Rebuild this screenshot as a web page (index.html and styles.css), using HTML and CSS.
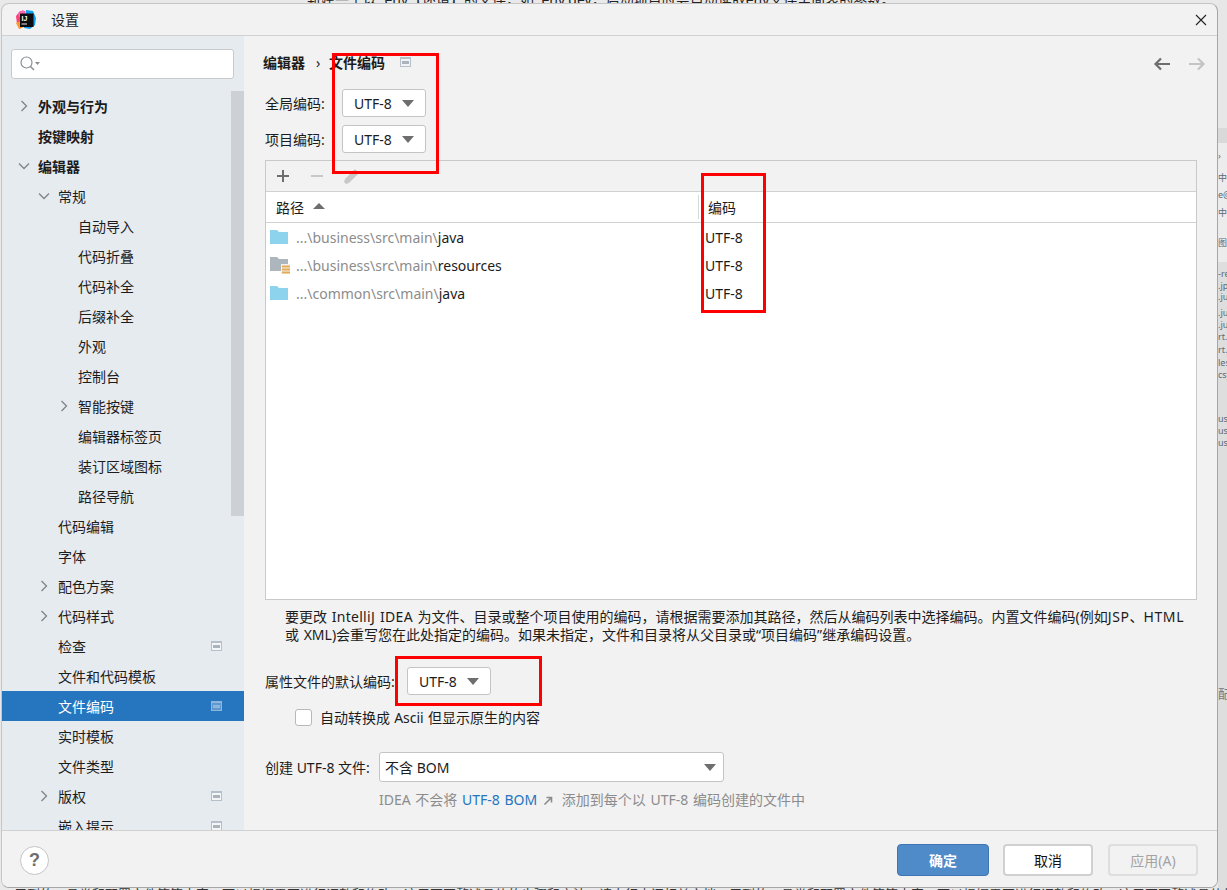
FILE: index.html
```html
<!DOCTYPE html>
<html lang="zh">
<head>
<meta charset="utf-8">
<title>设置</title>
<link rel="stylesheet" href="styles.css">
</head>
<body>
<div class="backdrop">
  <div class="bg-top">新建一个以 .env【环境】的文件，如 .env.dev，启动项目时会自动读取env文件里面表的参数。</div>
  <div class="bg-side">
    <span class="s1">›</span><span class="s2">中图</span><span class="s3">e@</span><span class="s4">中图</span><span class="s5">图图</span>
    <span class="s6">-rep</span><span class="s7">.jpu</span><span class="s8">.jun</span><span class="s9">.jun</span><span class="s10">.jun</span><span class="s11">rt.e</span><span class="s12">rt.j</span><span class="s13">les.</span><span class="s14">csy</span>
    <span class="s15">us.</span><span class="s16">us.</span><span class="s17">us.</span><span class="s18">配</span>
  </div>
  <div class="bg-bottom">用到的工具类和配置文件等等内容，可以根据需要进行调整和修改，这里不再赘述具体的步骤和方法，请自行查阅相关文档。用到的工具类和配置文件等等内容，可以根据需要进行调整和修改，这里不再赘述具体的步骤和方法，请自行查阅相关文档。</div>
</div>

<div class="window">
  <header class="titlebar">
    <svg class="logo" width="20" height="20" viewBox="0 0 20 20">
      <path d="M0 6 L4 1 L9 1 L9 12 L4 19 L1 14Z" fill="#fc3f78"/>
      <path d="M0 13 L6 10 L8 17 L3 19Z" fill="#fd9a2d"/>
      <path d="M10 0 L17 1 L20 8 L19 15 L14 19 L8 18Z" fill="#139fea"/>
      <path d="M2 3 L7 0 L10 3 L3 7Z" fill="#f56bb0"/>
      <rect x="4" y="3.500" width="13.500" height="13.500" fill="#0d0d12"/>
      <text x="5.500" y="10.500" class="logo-text">IJ</text>
      <rect x="5.500" y="13.500" width="5.500" height="1" fill="#eee"/>
    </svg>
    <span class="title">设置</span>
    <svg class="close" width="12" height="12" viewBox="0 0 12 12"><path d="M1 1L11 11M11 1L1 11" stroke="#222" stroke-width="1.100" fill="none"/></svg>
  </header>

  <div class="main">
    <aside class="sidebar">
      <div class="search">
        <svg width="22" height="18" viewBox="0 0 22 18"><circle cx="7.500" cy="7.500" r="5.500" fill="none" stroke="#8a8f94" stroke-width="1.200"/><path d="M11.500 11.500L15 15" stroke="#8a8f94" stroke-width="1.500"/><path d="M16 7h5l-2.500 3z" fill="#8a8f94"/></svg>
      </div>
      <div class="tree">
        <div class="scrollbar"></div>
        <div class="row l0 bold"><svg class="chev" width="12" height="12" viewBox="0 0 12 12"><path d="M3.500 1L8.500 6L3.500 11" fill="none" stroke="#7f8489" stroke-width="1.300"/></svg><span>外观与行为</span></div>
        <div class="row l0 bold"><span class="slot"></span><span>按键映射</span></div>
        <div class="row l0 bold"><svg class="chev" width="12" height="12" viewBox="0 0 12 12"><path d="M1 3.500L6 8.500L11 3.500" fill="none" stroke="#7f8489" stroke-width="1.300"/></svg><span>编辑器</span></div>
        <div class="row l1"><svg class="chev" width="12" height="12" viewBox="0 0 12 12"><path d="M1 3.500L6 8.500L11 3.500" fill="none" stroke="#7f8489" stroke-width="1.300"/></svg><span>常规</span></div>
        <div class="row l2"><span class="slot"></span><span>自动导入</span></div>
        <div class="row l2"><span class="slot"></span><span>代码折叠</span></div>
        <div class="row l2"><span class="slot"></span><span>代码补全</span></div>
        <div class="row l2"><span class="slot"></span><span>后缀补全</span></div>
        <div class="row l2"><span class="slot"></span><span>外观</span></div>
        <div class="row l2"><span class="slot"></span><span>控制台</span></div>
        <div class="row l2"><svg class="chev" width="12" height="12" viewBox="0 0 12 12"><path d="M3.500 1L8.500 6L3.500 11" fill="none" stroke="#7f8489" stroke-width="1.300"/></svg><span>智能按键</span></div>
        <div class="row l2"><span class="slot"></span><span>编辑器标签页</span></div>
        <div class="row l2"><span class="slot"></span><span>装订区域图标</span></div>
        <div class="row l2"><span class="slot"></span><span>路径导航</span></div>
        <div class="row l1"><span class="slot"></span><span>代码编辑</span></div>
        <div class="row l1"><span class="slot"></span><span>字体</span></div>
        <div class="row l1"><svg class="chev" width="12" height="12" viewBox="0 0 12 12"><path d="M3.500 1L8.500 6L3.500 11" fill="none" stroke="#7f8489" stroke-width="1.300"/></svg><span>配色方案</span></div>
        <div class="row l1"><svg class="chev" width="12" height="12" viewBox="0 0 12 12"><path d="M3.500 1L8.500 6L3.500 11" fill="none" stroke="#7f8489" stroke-width="1.300"/></svg><span>代码样式</span></div>
        <div class="row l1"><span class="slot"></span><span>检查</span><span class="badge"></span></div>
        <div class="row l1"><span class="slot"></span><span>文件和代码模板</span></div>
        <div class="row l1 selected"><span class="slot"></span><span>文件编码</span><span class="badge"></span></div>
        <div class="row l1"><span class="slot"></span><span>实时模板</span></div>
        <div class="row l1"><span class="slot"></span><span>文件类型</span></div>
        <div class="row l1"><svg class="chev" width="12" height="12" viewBox="0 0 12 12"><path d="M3.500 1L8.500 6L3.500 11" fill="none" stroke="#7f8489" stroke-width="1.300"/></svg><span>版权</span><span class="badge"></span></div>
        <div class="row l1"><span class="slot"></span><span>嵌入提示</span><span class="badge"></span></div>
      </div>
    </aside>

    <section class="content">
      <div class="crumbs">
        <span class="crumb">编辑器</span>
        <span class="sep">›</span>
        <span class="crumb">文件编码</span>
        <span class="badge crumb-badge"></span>
        <svg class="nav first" width="18" height="14" viewBox="0 0 18 14"><path d="M17 7H3M8 1.500L2.500 7L8 12.500" fill="none" stroke="#6e6e6e" stroke-width="2.200"/></svg>
        <svg class="nav" width="18" height="14" viewBox="0 0 18 14"><path d="M1 7H15M10 1.500L15.500 7L10 12.500" fill="none" stroke="#c4c4c4" stroke-width="2.200"/></svg>
      </div>

      <div class="field f-global"><label class="lbl-a">全局编码:</label><div class="combo small"><span>UTF-8</span><i class="caret"></i></div></div>
      <div class="field f-project"><label class="lbl-a">项目编码:</label><div class="combo small"><span>UTF-8</span><i class="caret"></i></div></div>

      <div class="table">
        <div class="toolbar">
          <svg width="14" height="14" viewBox="0 0 14 14"><path d="M7 1V13M1 7H13" stroke="#6e6e6e" stroke-width="2"/></svg>
          <svg width="14" height="14" viewBox="0 0 14 14"><path d="M1 7H13" stroke="#c8c8c8" stroke-width="2"/></svg>
          <svg class="pencil" width="18" height="18" viewBox="0 0 18 18"><path d="M1 15L2 12L12 2L16 6L6 16L3 17Z" fill="#c8c8c8"/></svg>
        </div>
        <div class="thead">
          <div class="th th-path">路径<i class="sort"></i></div>
          <div class="th th-enc">编码</div>
        </div>
        <div class="tr">
          <div class="td-path"><svg width="18" height="14" viewBox="0 0 18 14"><path d="M0 0H7L9 2H18V14H0Z" fill="#8dd3ee"/></svg><span class="dim">...\business\src\main\</span><span>java</span></div>
          <div class="td-enc">UTF-8</div>
        </div>
        <div class="tr">
          <div class="td-path"><svg width="20" height="17" viewBox="0 0 20 17"><path d="M0 0H7L9 2H18V14H0Z" fill="#aeb6bd"/><rect x="11" y="7" width="9" height="10" fill="#f2f2f2"/><path d="M12 9.500h8M12 12.500h8M12 15.500h8" stroke="#e3ac54" stroke-width="2"/></svg><span class="dim shift">...\business\src\main\</span><span>resources</span></div>
          <div class="td-enc">UTF-8</div>
        </div>
        <div class="tr">
          <div class="td-path"><svg width="18" height="14" viewBox="0 0 18 14"><path d="M0 0H7L9 2H18V14H0Z" fill="#8dd3ee"/></svg><span class="dim">...\common\src\main\</span><span>java</span></div>
          <div class="td-enc">UTF-8</div>
        </div>
      </div>

      <p class="desc">要更改 <span class="lat">IntelliJ IDEA</span> 为文件、目录或整个项目使用的编码，请根据需要添加其路径，然后从编码列表中选择编码。内置文件编码(例如<span class="lat2">JSP</span>、<span class="lat2">HTML</span><br>或 XML)会重写您在此处指定的编码。如果未指定，文件和目录将从父目录或“项目编码”继承编码设置。</p>

      <div class="field f-props"><label class="lbl-b">属性文件的默认编码:</label><div class="combo small"><span>UTF-8</span><i class="caret"></i></div></div>

      <div class="check"><span class="box"></span><span>自动转换成 Ascii 但显示原生的内容</span></div>

      <div class="field f-create"><label class="lbl-c">创建 UTF-8 文件:</label><div class="combo wide"><span>不含 BOM</span><i class="caret"></i></div></div>

      <div class="hint">IDEA 不会将 <a class="link">UTF-8 BOM</a><svg class="ext" width="10" height="10" viewBox="0 0 10 10"><path d="M1.500 8.500L8 2M3.500 1.500H8.500V6.500" fill="none" stroke="#8c8c8c" stroke-width="1.600"/></svg> 添加到每个以 UTF-8 编码创建的文件中</div>
    </section>
  </div>

  <footer class="footer">
    <div class="help">?</div>
    <div class="buttons">
      <button class="btn primary">确定</button>
      <button class="btn">取消</button>
      <button class="btn disabled">应用(A)</button>
    </div>
  </footer>

  <div class="mark m1"></div>
  <div class="mark m2"></div>
  <div class="mark m3"></div>
</div>
</body>
</html>
```

FILE: styles.css
```css
* { box-sizing: border-box; }
html, body { margin: 0; height: 100%; }
body {
  width: 1227px;
  height: 890px;
  overflow: hidden;
  position: relative;
  background: #e9e9e9;
  font-family: "Noto Sans", "Noto Sans CJK SC", sans-serif;
  font-size: 14px;
  color: #1c1c1c;
}

/* what shows behind the dialog */
.backdrop { position: absolute; inset: 0; overflow: hidden; }
.bg-top { position: absolute; left: 307px; top: -9px; font-size: 14px; line-height: 18px; white-space: nowrap; color: #222; }
.bg-bottom { position: absolute; left: 14px; top: 886px; font-size: 13px; line-height: 16px; white-space: nowrap; color: #333; }
.bg-side { position: absolute; left: 1218px; top: 0; width: 9px; height: 890px; background: linear-gradient(#e7e7e7, #e7e7e7 128px, #d9d9d9 128px, #d9d9d9 143px, #ececec 143px, #ececec 262px, #dedede 262px, #dedede 880px); overflow: hidden; font-size: 9px; line-height: 10px; color: #5a6a78; }
.bg-side span { position: absolute; left: 0; white-space: nowrap; }
.s1 { top: 151px; } .s2 { top: 173px; } .s3 { top: 190px; } .s4 { top: 208px; } .s5 { top: 238px; }
.s6 { top: 269px; } .s7 { top: 281px; } .s8 { top: 292px; } .s9 { top: 308px; } .s10 { top: 320px; }
.s11 { top: 332px; } .s12 { top: 345px; } .s13 { top: 358px; } .s14 { top: 370px; }
.s15 { top: 414px; } .s16 { top: 426px; } .s17 { top: 438px; } .s18 { top: 690px; font-size: 12px; color: #777; }

/* dialog */
.window {
  position: relative;
  margin: 3px 0 0 1px;
  width: 1217px;
  height: 885px;
  background: #f2f2f2;
  border: 1px solid #a6a6a6;
  border-left-color: #c6c6c6;
  border-top-color: #c4c4c4;
  border-radius: 8px;
  overflow: hidden;
  display: flex;
  flex-direction: column;
}
.titlebar {
  height: 32px;
  flex: none;
  display: flex;
  align-items: center;
  border-bottom: 1px solid #d1d1d1;
  padding: 0 9px 0 14px;
}
.logo { margin-top: 0; flex: none; }
.logo-text { font-family: "Liberation Sans", sans-serif; font-size: 7px; font-weight: 700; fill: #fff; }
.title { margin-left: 15px; margin-top: -2px; }
.close { margin-left: auto; margin-right: 1px; margin-top: 1px; }

.main { height: 794px; flex: none; display: flex; }

/* sidebar */
.sidebar { width: 242px; flex: none; background: #e6ebf0; display: flex; flex-direction: column; overflow: hidden; }
.search {
  width: 223px;
  height: 30px;
  flex: none;
  margin: 13px 0 12px 9px;
  background: #fff;
  border: 1px solid #c9c9c9;
  border-radius: 3px;
  display: flex;
  align-items: center;
  padding-left: 7px;
}
.tree { position: relative; flex: 1; overflow: hidden; }
.scrollbar { position: absolute; right: 0; top: 0; width: 13px; height: 425px; background: #cdd1d6; }
.row { height: 30px; display: flex; align-items: center; padding-right: 22px; white-space: nowrap; }
.row.l0 { padding-left: 16px; }
.row.l1 { padding-left: 36px; }
.row.l2 { padding-left: 56px; }
.row.bold { font-weight: 700; }
.chev { width: 12px; margin-right: 8px; flex: none; }
.slot { width: 20px; flex: none; }
.row.selected { background: #2675bf; color: #fff; }
.badge {
  width: 11px;
  height: 10px;
  margin-left: auto;
  background: #f4f6f8;
  border: 1px solid #b6c0ca;
  border-top-width: 2px;
  position: relative;
  flex: none;
}
.badge::after { content: ""; position: absolute; left: 1px; right: 1px; top: 2px; height: 3px; background: #a9b4bf; }
.row.selected .badge { background: #5f97cf; border-color: #8db6dc; }
.row.selected .badge::after { background: #8db6dc; }

/* right side */
.content { flex: 1; min-width: 0; padding: 16px 0 0 19px; display: flex; flex-direction: column; background: #f2f2f2; }
.crumbs { height: 20px; display: flex; align-items: center; padding-right: 11px; font-weight: 700; }
.sep { margin: 0 9px 0 11px; font-weight: 400; width: 4px; }
.crumb-badge { margin: 0 0 0 15px; background: #f2f2f2; }
.nav { margin-top: 3px; }
.nav.first { margin-left: auto; margin-right: 17px; }

.field { display: flex; align-items: center; padding-left: 2px; }
.f-global { margin-top: 17px; }
.f-project { margin-top: 8px; }
.f-props { margin-top: 23px; }
.f-create { margin-top: 26px; }
.lbl-a { width: 77px; flex: none; }
.lbl-b { width: 142px; flex: none; }
.lbl-c { width: 114px; flex: none; }

.combo {
  display: flex;
  align-items: center;
  background: #fff;
  border: 1px solid #c4c4c4;
  border-radius: 3px;
  padding-left: 11px;
}
.combo.small { width: 84px; height: 28px; }
.combo.wide { width: 345px; height: 30px; padding-left: 5px; }
.combo.wide .caret { margin-left: auto; margin-right: 7px; }
.caret { width: 0; height: 0; margin-left: 10px; border-left: 6px solid transparent; border-right: 6px solid transparent; border-top: 7px solid #6e6e6e; }

.table {
  margin: 7px 0 0 2px;
  width: 932px;
  height: 440px;
  flex: none;
  background: #fff;
  border: 1px solid #c9c9c9;
}
.toolbar {
  height: 31px;
  background: #f2f2f2;
  border-bottom: 1px solid #d1d1d1;
  display: flex;
  align-items: center;
  gap: 20px;
  padding-left: 10px;
}
.pencil { margin-left: -1px; }
.thead { height: 31px; display: flex; border-bottom: 1px solid #d1d1d1; }
.th { display: flex; align-items: center; }
.th-path { width: 433px; padding-left: 10px; position: relative; }
.th-path::after { content: ""; position: absolute; right: 0; top: 3px; bottom: 3px; width: 1px; background: #d8d8d8; }
.th-enc { padding-left: 9px; }
.sort { margin-left: 9px; margin-bottom: 3px; width: 0; height: 0; border-left: 6px solid transparent; border-right: 6px solid transparent; border-bottom: 6px solid #6e6e6e; }
.tr { height: 28px; display: flex; align-items: center; }
.td-path { width: 439px; display: flex; align-items: center; padding-left: 4px; white-space: nowrap; }
.td-path svg { flex: none; margin-right: 8px; }
.td-path .shift { margin-left: -2px; }
.dim { color: #8c8c8c; }
.td-enc { flex: none; }

.desc { margin: 8px 0 0 22px; line-height: 18px; white-space: nowrap; word-spacing: 1px; }
.lat { letter-spacing: 0.3px; }
.lat2 { letter-spacing: 0.6px; }

.check { margin: 13px 0 0 32px; height: 18px; display: flex; align-items: center; gap: 8px; word-spacing: 0.5px; }
.box { width: 17px; height: 17px; background: #fff; border: 1px solid #b8b8b8; border-radius: 3px; flex: none; }

.hint { margin: 9px 0 0 116px; height: 18px; line-height: 18px; color: #8c8c8c; white-space: nowrap; word-spacing: 1px; }
.link { color: #2675bf; }
.ext { margin: 0 4px 0 6px; vertical-align: -1px; }

/* footer */
.footer {
  height: 57px;
  flex: none;
  display: flex;
  align-items: center;
  justify-content: space-between;
  border-top: 1px solid #d1d1d1;
  padding: 2px 19px 0 18px;
  background: #f2f2f2;
}
.help {
  width: 29px;
  height: 29px;
  border-radius: 50%;
  background: #fff;
  border: 1px solid #c4c4c4;
  display: flex;
  align-items: center;
  justify-content: center;
  font-family: "Liberation Sans", sans-serif;
  font-size: 18px;
  font-weight: 700;
  color: #6e6e6e;
}
.buttons { display: flex; gap: 14px; }
.btn {
  width: 90px;
  height: 32px;
  font: inherit;
  background: #fff;
  border: 2px solid #d0d0d0;
  border-radius: 4px;
  color: #111;
  padding: 0;
}
.btn.primary { background: #4f8ac9; border: 1px solid #3f75b2; color: #fff; font-weight: 700; width: 92px; }
.btn.disabled { background: #f2f2f2; border-color: #dedede; color: #a3a3a3; margin-left: 1px; }

/* red annotations drawn over the dialog */
.mark { position: absolute; border: 3px solid #f00; pointer-events: none; }
.m1 { left: 330px; top: 49px; width: 107px; height: 121px; }
.m2 { left: 699px; top: 169px; width: 65px; height: 140px; }
.m3 { left: 393px; top: 652px; width: 147px; height: 50px; }
```
